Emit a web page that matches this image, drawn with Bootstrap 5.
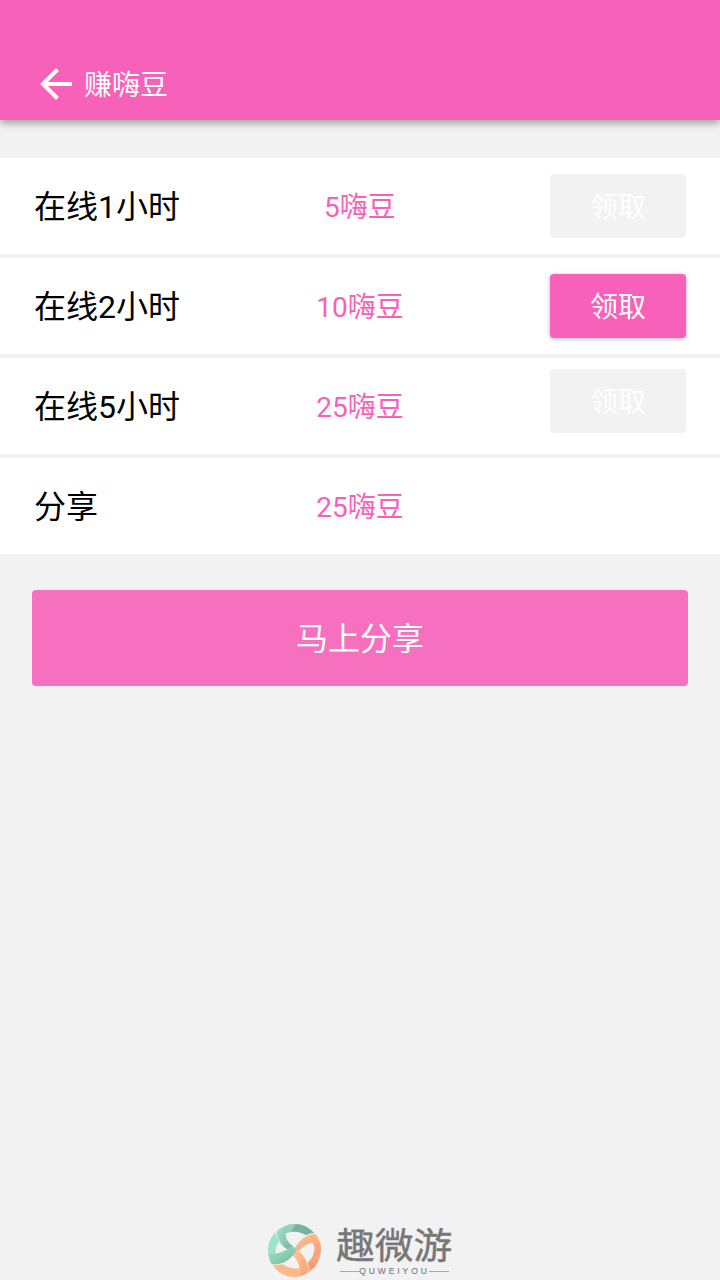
<!DOCTYPE html>
<html lang="zh-CN">
<head>
<meta charset="utf-8">
<meta name="viewport" content="width=device-width, initial-scale=1">
<title>赚嗨豆</title>
<link href="https://cdn.jsdelivr.net/npm/bootstrap@5.3.0/dist/css/bootstrap.min.css" rel="stylesheet">
<style>
body{background:#f2f2f2;font-family:Roboto,"Noto Sans CJK SC",sans-serif;font-size:28px;line-height:1.2;overflow:hidden}
.page{height:1280px}
.topbar{height:120px;padding:48px 40px 0;background:#f761b9;box-shadow:0 3px 8px rgba(0,0,0,.36)}
.topbar svg{margin-right:12px}
.topbar span{padding-top:4px}
.tasks{margin-top:38px;gap:4px}
.task{height:96px;padding:0 34px;background:#fff}
.task-name{font-size:32px;color:#000;padding-top:2px}
.pink{color:#f761b9;padding-top:4px}
.btn-claim{width:136px;height:64px;padding:4px 0 0;border:0;border-radius:4px;font-size:28px;color:#fff;background:#f761b9;box-shadow:0 1px 4px rgba(0,0,0,.3)}
.btn-claim:disabled{background:#f2f2f2;color:#fff;opacity:1;box-shadow:none}
.task .btn{display:block;margin-left:auto}
.task .raised{margin-bottom:10px}
.btn-share{height:96px;margin:36px 32px 0;padding:2px 0 0;border:0;border-radius:4px;font-size:32px;color:#fff;background:#f770bf}
.brand-row{padding:0 0 3px 268px;height:56px}
.brand-words{width:117px;margin-left:15px;color:#777}
.brand-name{font-size:38.8px;line-height:36px;height:42px;padding-top:5px;white-space:nowrap;-webkit-text-stroke:.4px #777;transform:scaleY(.94)}
.brand-latin{font-size:8.500px;line-height:8px;letter-spacing:2.9px;font-family:"Liberation Sans",sans-serif;margin:1px 4px 0;height:8px}
.brand-latin i{height:1px;background:#aaa;flex:1}
.brand-latin span{margin:0 -1px;-webkit-text-stroke:.1px #777}
</style>
</head>
<body>
<div class="page d-flex flex-column">
  <header class="topbar d-flex align-items-center text-white">
    <svg width="32" height="32" viewBox="0 0 32 32" fill="none" stroke="#fff" stroke-width="4"><path d="M17.5 1.5 3 16l14.500 14.500M3 16h29"/></svg>
    <span>赚嗨豆</span>
  </header>
  <main class="tasks d-flex flex-column">
    <div class="task row g-0 align-items-center"><div class="col-4 task-name">在线1小时</div><div class="col-4 text-center pink">5嗨豆</div><div class="col-4"><button class="btn btn-claim" disabled>领取</button></div></div>
    <div class="task row g-0 align-items-center"><div class="col-4 task-name">在线2小时</div><div class="col-4 text-center pink">10嗨豆</div><div class="col-4"><button class="btn btn-claim">领取</button></div></div>
    <div class="task row g-0 align-items-center"><div class="col-4 task-name">在线5小时</div><div class="col-4 text-center pink">25嗨豆</div><div class="col-4"><button class="btn btn-claim raised" disabled>领取</button></div></div>
    <div class="task row g-0 align-items-center"><div class="col-4 task-name">分享</div><div class="col-4 text-center pink">25嗨豆</div></div>
  </main>
  <button class="btn btn-share">马上分享</button>
  <footer class="brand-row d-flex mt-auto">
    <svg width="53" height="53" viewBox="24 27 159 159">
      <defs>
        <linearGradient id="mint" x1="0" y1="0" x2="1" y2="1"><stop offset="0" stop-color="#a5e8cf"/><stop offset="1" stop-color="#74b09b"/></linearGradient>
        <linearGradient id="peach" x1="0" y1="0" x2="1" y2="1"><stop offset="0" stop-color="#fcc792"/><stop offset="1" stop-color="#f7a077"/></linearGradient>
      </defs>
      <path d="M106 27Q138 27 163 54Q150 54 138 61Q118 47 92 51Z" fill="#78b29e"/>
      <path d="M48 51Q73 26 106 27L92 51L78 55Q74 76 100 94L84 104Q56 91 48 51Z" fill="url(#mint)"/>
      <path d="M46 52Q20 78 25 122L48 119Q43 94 59 79Q49 67 46 52Z" fill="#a0e1c9"/>
      <path d="M25 118Q65 118 97 93L111 104Q84 150 35 148Q27 135 25 118Z" fill="url(#mint)"/>
      <path d="M104 99Q129 58 165 56Q178 69 182 92L163 95Q161 87 156 83Q132 89 112 111Z" fill="url(#peach)"/>
      <path d="M162 87L182 87Q187 127 165 156L143 142Q169 119 162 87Z" fill="#f7a57e"/>
      <path d="M111 104Q142 125 147 171Q133 182 116 185Q126 145 98 121Z" fill="url(#peach)"/>
      <path d="M38 151Q57 147 72 149Q92 164 119 159L116 185Q67 192 38 151Z" fill="#fcb98a"/>
      <path d="M143 142L165 144L165 156L147 171Z" fill="#f59a72"/>
      <path d="M47 52Q53 72 62 82M143 145Q147 158 147 171" fill="none" stroke="#f2f2f2" stroke-width="1.5"/>
    </svg>
    <div class="brand-words">
      <div class="brand-name">趣微游</div>
      <div class="brand-latin d-flex align-items-center"><i></i><span>QUWEIYOU</span><i></i></div>
    </div>
  </footer>
</div>
<script src="https://cdn.jsdelivr.net/npm/bootstrap@5.3.0/dist/js/bootstrap.bundle.min.js"></script>
</body>
</html>
